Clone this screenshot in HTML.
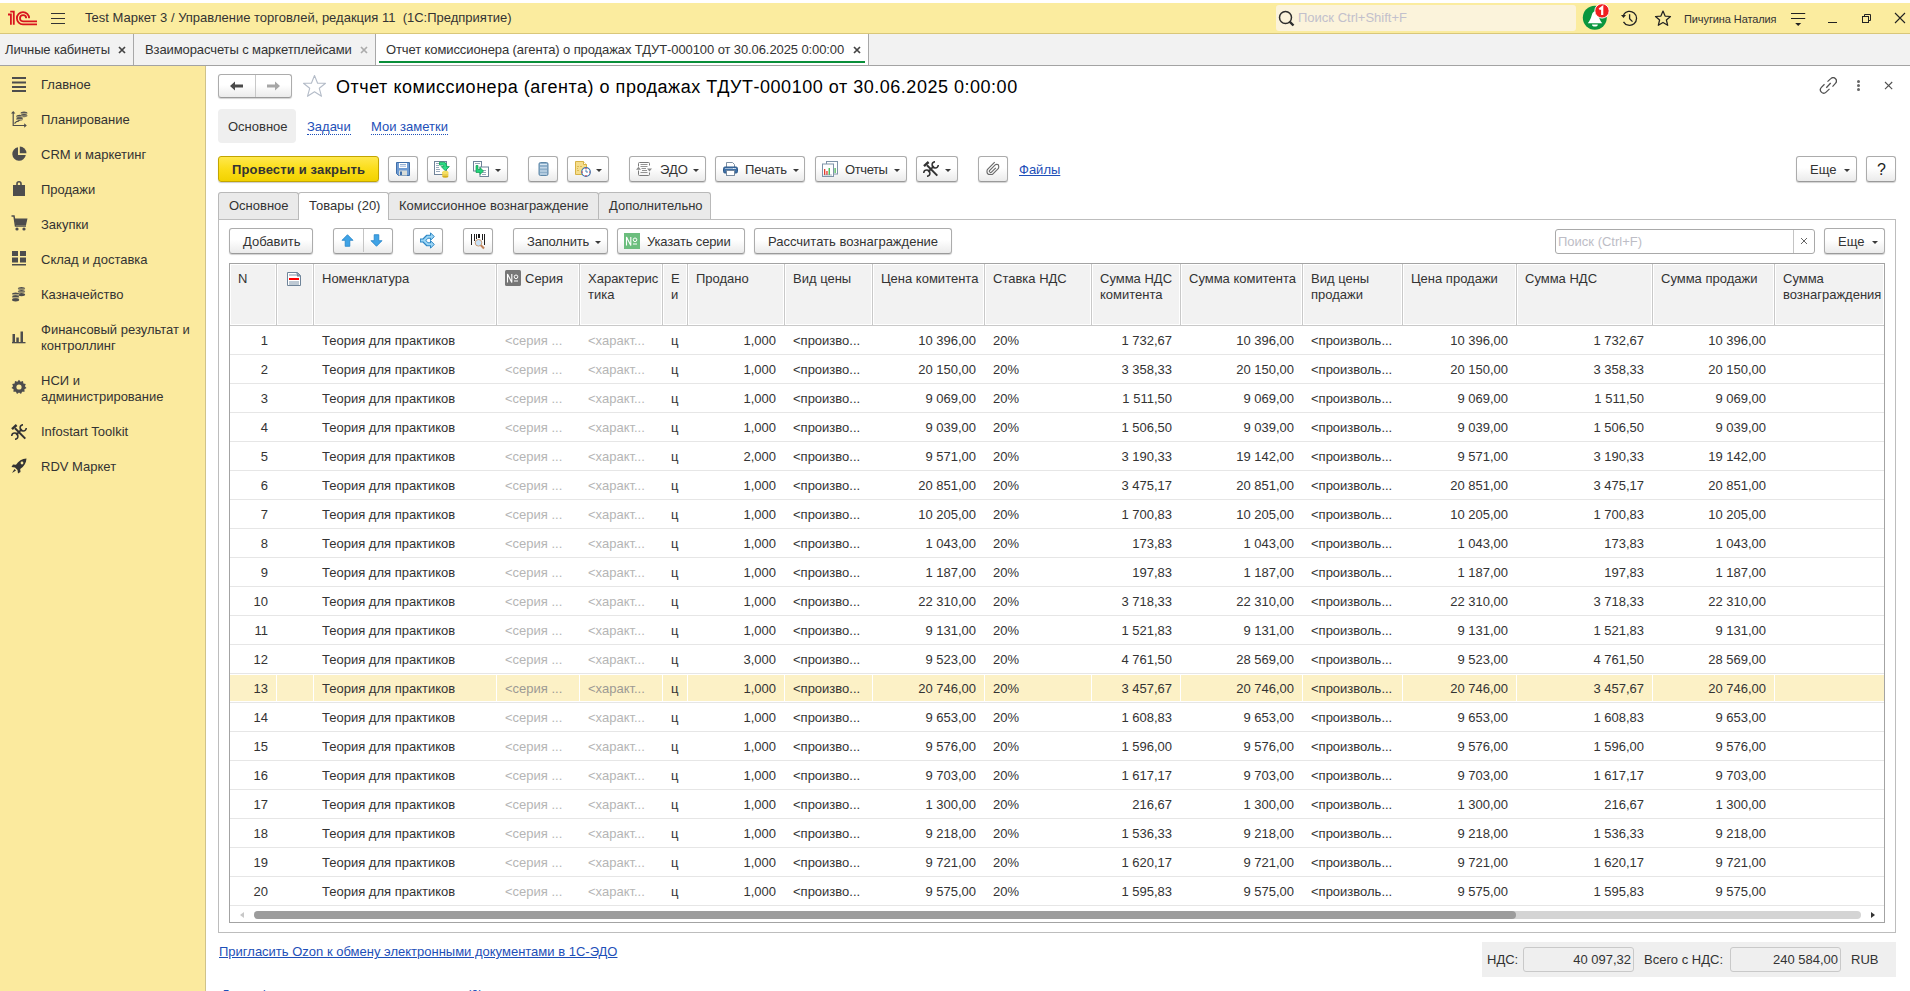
<!DOCTYPE html>
<html><head><meta charset="utf-8"><title>1C</title>
<style>
*{box-sizing:border-box}
html,body{margin:0;padding:0}
body{width:1910px;height:991px;overflow:hidden;position:relative;font-family:"Liberation Sans",sans-serif;font-size:13px;color:#333;background:#fff}
.a{position:absolute}
.t{position:absolute;white-space:nowrap;line-height:16px}
/* top bar */
#top{left:0;top:3px;width:1910px;height:31px;background:#FBEC9F;border-bottom:1px solid #D9C77A}
/* open windows bar */
#wtabs{left:0;top:34px;width:1910px;height:32px;background:#F2F2F2;border-bottom:1px solid #A3A3A3}
.wsep{position:absolute;top:0;width:1px;height:31px;background:#A8A8A8}
/* sidebar */
#side{left:0;top:66px;width:206px;height:925px;background:#FBEA9E;border-right:1px solid #CFC28A}
.si{position:absolute;left:41px;line-height:16px;color:#333}
.sic{position:absolute;left:11px}
/* buttons */
.btn{position:absolute;height:26px;border:1px solid #ACACAC;border-bottom-color:#9A9A9A;border-radius:3px;background:linear-gradient(#FFFFFF 0%,#FFFFFF 45%,#EBEBEB 100%);box-shadow:0 1px 1px rgba(0,0,0,.18)}
.btn .bt{position:absolute;top:3px;line-height:16px;white-space:nowrap;color:#333}
.dd{position:absolute;width:0;height:0;border-left:3px solid transparent;border-right:3px solid transparent;border-top:3px solid #3A3A3A}
.lnk{color:#1D4FB8}
.dotu{border-bottom:1px dotted #1D4FB8}
/* form tabs */
.ft{position:absolute;top:192px;height:27px;border:1px solid #B9B9B9;border-bottom:none;border-radius:3px 3px 0 0;background:#EAEAEA;line-height:26px;padding-left:10px;color:#333;white-space:nowrap}
#panel{left:218px;top:219px;width:1678px;height:714px;border:1px solid #BDBDBD}
/* table */
#tbl{left:229px;top:263px;width:1656px;height:660px;border:1px solid #A3A3A3;overflow:hidden;background:#fff}
.hc{position:absolute;top:0;height:61px;background:#F2F2F2;border-top:1px solid #fff;border-left:1px solid #fff;border-right:1px solid #fff;border-bottom:1px solid #fff;padding:6px 0 0 7px;line-height:16px;color:#333;white-space:nowrap;overflow:hidden}
.hsep{position:absolute;top:0;width:1px;height:61px;background:#C9C9C9}
.hbot{position:absolute;left:0;top:61px;width:1656px;height:1px;background:#C9C9C9}
.row{position:absolute;left:0;width:1656px;height:29px;border-bottom:1px solid #E6E6E6}
.c{position:absolute;top:1px;height:27px;line-height:28px;padding:0 8px;white-space:nowrap;overflow:hidden;color:#333}
.c.r{text-align:right}
.c.g{color:#B5B5B5}
.row.sel .c{top:1px;height:26px;line-height:28px;background:#FCF1C6}
.row.sel .c.g{color:#9C9A94}
.noic{display:inline-block;width:16px;height:16px;margin-right:4px;vertical-align:top;position:relative;top:-1px}
.hicon{position:absolute;left:9px;top:7px}
</style></head><body>

<!-- ============ TOP BAR ============ -->
<div id="top" class="a">
  <svg class="a" style="left:0;top:0" width="40" height="28" viewBox="0 3 40 28"><g fill="none" stroke="#D8141E" stroke-width="1.8" stroke-linejoin="miter"><path d="M8 14.5H10.9V24.8"/><path d="M10.2 11.6H13.8V24.8"/><path d="M29.1 18.2A6.1 6.1 0 1 0 23 24.3H37"/><path d="M26.2 18.2A3.1 3.1 0 1 0 23 21.3H37"/></g></svg>
  <div class="a" style="left:51px;top:10px;width:14px;height:1.4px;background:#333"></div>
  <div class="a" style="left:51px;top:15px;width:14px;height:1.4px;background:#333"></div>
  <div class="a" style="left:51px;top:20px;width:14px;height:1.4px;background:#333"></div>
  <div class="t" style="left:85px;top:7px;color:#333">Test Маркет 3 / Управление торговлей, редакция 11&nbsp; (1С:Предприятие)</div>

  <div class="a" style="left:1276px;top:2px;width:300px;height:26px;background:#FBF3DB;border-radius:3px"></div>
  <svg class="a" style="left:1278px;top:7px" width="17" height="17" viewBox="0 0 17 17"><circle cx="7.5" cy="7.5" r="6" fill="none" stroke="#2E2E2E" stroke-width="1.5"/><path d="M11.6 11.6L15.5 15.5" stroke="#2E2E2E" stroke-width="2.4"/></svg>
  <div class="t" style="left:1298px;top:7px;color:#C2C0CC">Поиск Ctrl+Shift+F</div>

  <!-- bell -->
  <svg class="a" style="left:1578px;top:-1px" width="34" height="32" viewBox="0 0 34 32">
    <circle cx="16.8" cy="15.8" r="12" fill="#0A963E"/>
    <path d="M9.8 21.2H24.2C22.6 19.4 21.2 16.8 20.2 13C19.5 10.5 18.2 9.3 17 9.3C15.8 9.3 14.5 10.5 13.8 13C12.8 16.8 11.4 19.4 9.8 21.2Z" fill="#fff"/>
    <path d="M14 22.4H19.8A2.9 2 0 0 1 14 22.4Z" fill="#fff"/>
    <circle cx="24" cy="8.9" r="7.2" fill="#F02020" stroke="#fff" stroke-width="1"/>
    <path d="M21.3 7.4L24.2 5.2V13" fill="none" stroke="#fff" stroke-width="2.2"/>
  </svg>
  <!-- history -->
  <svg class="a" style="left:1620px;top:6px" width="18" height="18" viewBox="0 0 18 18"><path d="M3.5 12.8A7 7 0 1 0 3.5 5.8" fill="none" stroke="#222" stroke-width="1.3"/><path d="M1 5.9H6L3.5 9Z" fill="#222"/><path d="M9.6 5.3V9.7L12.5 12.6" fill="none" stroke="#222" stroke-width="1.3"/></svg>
  <!-- star -->
  <svg class="a" style="left:1654px;top:6px" width="18" height="19" viewBox="0 -0.5 18 19"><path d="M9 1.6L11.1 6.6L16.5 7L12.4 10.5L13.7 15.8L9 13L4.3 15.8L5.6 10.5L1.5 7L6.9 6.6Z" fill="none" stroke="#222" stroke-width="1.25" stroke-linejoin="round"/></svg>
  <div class="t" style="left:1684px;top:8px;font-size:11px;color:#333;letter-spacing:-0.1px">Пичугина Наталия</div>
  <!-- filter/menu -->
  <svg class="a" style="left:1789px;top:8px" width="17" height="17" viewBox="0 0 17 17"><path d="M2 2.5H16.2M2 7.5H16.2" stroke="#222" stroke-width="1.05"/><path d="M6.2 11.9H12.2L9.2 14.9Z" fill="#222"/></svg>
  <div class="a" style="left:1828px;top:19px;width:9px;height:1px;background:#222"></div>
  <svg class="a" style="left:1860px;top:10px" width="12" height="12" viewBox="0 0 12 12"><path d="M4.5 3.5V1.5H10.5V7.5H8.5" fill="none" stroke="#222" stroke-width="1"/><rect x="2.5" y="3.5" width="6" height="6" fill="none" stroke="#222" stroke-width="1"/></svg>
  <svg class="a" style="left:1894px;top:9px" width="13" height="13" viewBox="0 0 13 13"><path d="M1 1L11 11M11 1L1 11" stroke="#222" stroke-width="1.1"/></svg>
</div>

<!-- ============ OPEN WINDOWS TABS ============ -->
<div id="wtabs" class="a">
  <div class="t" style="left:5px;top:8px;letter-spacing:-0.15px">Личные кабинеты</div>
  <svg class="a" style="left:118px;top:12px" width="8" height="8" viewBox="0 0 8 8"><path d="M1 1L7 7M7 1L1 7" stroke="#444" stroke-width="1.7"/></svg>
  <div class="wsep" style="left:133px"></div>
  <div class="t" style="left:145px;top:8px;letter-spacing:-0.1px">Взаиморасчеты с маркетплейсами</div>
  <svg class="a" style="left:360px;top:12px" width="8" height="8" viewBox="0 0 8 8"><path d="M1 1L7 7M7 1L1 7" stroke="#ABABAB" stroke-width="1.7"/></svg>
  <div class="wsep" style="left:375px"></div>
  <div class="a" style="left:376px;top:0;width:492px;height:31px;background:#fff"></div>
  <div class="t" style="left:386px;top:8px;letter-spacing:-0.1px">Отчет комиссионера (агента) о продажах ТДУТ-000100 от 30.06.2025 0:00:00</div>
  <svg class="a" style="left:853px;top:12px" width="8" height="8" viewBox="0 0 8 8"><path d="M1 1L7 7M7 1L1 7" stroke="#444" stroke-width="1.7"/></svg>
  <div class="a" style="left:379px;top:27px;width:486px;height:2px;background:#0A8F3A"></div>
  <div class="wsep" style="left:868px"></div>
</div>

<!-- ============ SIDEBAR ============ -->
<div id="side" class="a">
  <!-- Главное -->
  <svg class="sic" style="top:10px" width="16" height="16" viewBox="0 0 16 16"><path d="M1 2H15M1 6.5H15M1 11H15M1 15H15" stroke="#4D4D4D" stroke-width="1.8"/></svg>
  <div class="si" style="top:11px">Главное</div>
  <!-- Планирование -->
  <svg class="sic" style="top:44px" width="17" height="18" viewBox="0 0 17 18"><path d="M2.2 2V15.5H15" fill="none" stroke="#4D4D4D" stroke-width="1.2"/><path d="M0 3.6L2.2 1L4.4 3.6Z M13.2 13.3L15.8 15.5L13.2 17.7Z" fill="#4D4D4D"/><path d="M3.5 13.5L5.5 11.5H7L9 9.5" fill="none" stroke="#4D4D4D" stroke-width="1.1"/><g fill="#4D4D4D"><ellipse cx="13" cy="3" rx="3.4" ry="1.6"/><ellipse cx="13" cy="5.6" rx="3.4" ry="1.6"/><ellipse cx="8.6" cy="6.4" rx="3.4" ry="1.6"/><ellipse cx="8.6" cy="9" rx="3.4" ry="1.6"/></g><path d="M9.8 3.4H16.2M9.8 6H16.2M5.4 6.8H11.8M5.4 9.4H11.8" stroke="#FBEA9E" stroke-width="0.6"/></svg>
  <div class="si" style="top:46px">Планирование</div>
  <!-- CRM -->
  <svg class="sic" style="top:80px" width="16" height="16" viewBox="0 0 16 16"><path d="M7 1.2A6.8 6.8 0 1 0 14.8 9H7Z" fill="#4D4D4D"/><path d="M8.8 0.5V7.2H15.5A7 7 0 0 0 8.8 0.5Z" fill="#4D4D4D"/></svg>
  <div class="si" style="top:81px">CRM и маркетинг</div>
  <!-- Продажи -->
  <svg class="sic" style="top:114px" width="16" height="17" viewBox="0 0 16 17"><path d="M2 5H14V16H2Z" fill="#4D4D4D"/><path d="M6 5.5V3.8A2 2 0 0 1 10 3.8V5.5" fill="none" stroke="#4D4D4D" stroke-width="1.6"/></svg>
  <div class="si" style="top:116px">Продажи</div>
  <!-- Закупки -->
  <svg class="sic" style="top:149px" width="17" height="16" viewBox="0 0 17 16"><path d="M0.5 1H3L4.5 11H15" fill="none" stroke="#4D4D4D" stroke-width="1.5"/><path d="M3.5 3.5H16.5L15 10H4.5Z" fill="#4D4D4D"/><circle cx="6" cy="14" r="1.6" fill="#4D4D4D"/><circle cx="13" cy="14" r="1.6" fill="#4D4D4D"/></svg>
  <div class="si" style="top:151px">Закупки</div>
  <!-- Склад -->
  <svg class="sic" style="top:184px" width="16" height="16" viewBox="0 0 16 16"><rect x="1" y="1" width="6" height="5" fill="#4D4D4D"/><rect x="9" y="1" width="6" height="5" fill="#4D4D4D"/><rect x="1" y="7.5" width="6" height="5" fill="#4D4D4D"/><rect x="9" y="7.5" width="6" height="5" fill="#4D4D4D"/><rect x="1" y="14" width="14" height="1.5" fill="#4D4D4D"/></svg>
  <div class="si" style="top:186px">Склад и доставка</div>
  <!-- Казначейство -->
  <svg class="sic" style="top:219px" width="16" height="17" viewBox="0 0 16 17"><g fill="#4D4D4D"><ellipse cx="10.5" cy="3.6" rx="3.6" ry="1.7"/><ellipse cx="10.5" cy="6.6" rx="3.6" ry="1.7"/><ellipse cx="10.5" cy="9.6" rx="3.6" ry="1.7"/><ellipse cx="4.6" cy="9.2" rx="3.6" ry="1.7"/><ellipse cx="4.6" cy="12.2" rx="3.6" ry="1.7"/><ellipse cx="4.6" cy="14.8" rx="3.6" ry="1.6"/></g><path d="M7.2 4.1H14.3M7.2 7.1H14.3M1 9.7H8.2M1 12.7H8.2" stroke="#FBEA9E" stroke-width="0.7"/></svg>
  <div class="si" style="top:221px">Казначейство</div>
  <!-- Финансовый -->
  <svg class="sic" style="top:262px" width="16" height="16" viewBox="0 0 16 16"><g fill="#4D4D4D"><rect x="1.5" y="6" width="2.5" height="8"/><rect x="5.3" y="9.5" width="2.5" height="4.5"/><rect x="9.5" y="3.5" width="2.5" height="10.5"/><rect x="1" y="14" width="13.5" height="1.3"/></g></svg>
  <div class="si" style="top:256px">Финансовый результат и<br>контроллинг</div>
  <!-- НСИ -->
  <svg class="sic" style="top:313px" width="16" height="16" viewBox="0 0 16 16"><path d="M8 0.8L9.6 2.7L12 2L12.4 4.4L14.8 5L13.9 7.3L15.5 9.1L13.4 10.3L13.6 12.8L11.1 12.7L10 15L8 13.6L6 15L4.9 12.7L2.4 12.8L2.6 10.3L0.5 9.1L2.1 7.3L1.2 5L3.6 4.4L4 2L6.4 2.7Z" fill="#4D4D4D"/><circle cx="8" cy="8" r="2.6" fill="#FBEA9E"/></svg>
  <div class="si" style="top:307px">НСИ и<br>администрирование</div>
  <!-- Infostart -->
  <svg class="sic" style="top:358px" width="16" height="16" viewBox="0 0 16 16"><g fill="none" stroke="#333"><path d="M4 4.2L14.3 14.6" stroke-width="2"/><path d="M1 5.2L5.6 1" stroke-width="2.4"/><path d="M5.2 10.8L10.8 5.2" stroke-width="1.7"/><path d="M12 0.7A3.1 3.1 0 1 0 15.3 4" stroke-width="1.5"/><path d="M0.7 12A3.1 3.1 0 1 1 4 15.3" stroke-width="1.5"/></g></svg>
  <div class="si" style="top:358px">Infostart Toolkit</div>
  <!-- RDV -->
  <svg class="sic" style="top:392px" width="16" height="16" viewBox="0 0 16 16"><path d="M15.5 0.5C11 0.8 7.5 3 5 6.8L2 6.5L0.5 9L4 9.5L6.5 12L7 15.5L9.5 14L9.2 11C13 8.5 15.2 5 15.5 0.5Z" fill="#333"/><path d="M3.5 11L1 15L5 12.5Z" fill="#333"/><circle cx="11" cy="5" r="1.4" fill="#FBEA9E"/></svg>
  <div class="si" style="top:393px">RDV Маркет</div>
</div>

<!-- ============ FORM HEADER ============ -->
<div class="btn" style="left:218px;top:74px;width:74px;height:24px"></div>
<div class="a" style="left:255px;top:75px;width:1px;height:22px;background:#C8C8C8"></div>
<svg class="a" style="left:229px;top:80px" width="16" height="12" viewBox="0 0 16 12"><path d="M1 6L6 1.5V4.5H14V7.5H6V10.5Z" fill="#4A4A4A"/></svg>
<svg class="a" style="left:265px;top:80px" width="16" height="12" viewBox="0 0 16 12"><path d="M15 6L10 1.5V4.5H2V7.5H10V10.5Z" fill="#A6A6A6"/></svg>
<svg class="a" style="left:302px;top:74px" width="25" height="24" viewBox="0 0 25 24"><path d="M12.5 1.5L15.6 9.2L23.5 9.3L17.3 14.3L19.5 22.3L12.5 17.8L5.5 22.3L7.7 14.3L1.5 9.3L9.4 9.2Z" fill="none" stroke="#B4BCC8" stroke-width="1.1" stroke-linejoin="round"/></svg>
<div class="t" style="left:336px;top:77px;font-size:18px;line-height:20px;color:#000;letter-spacing:0.52px">Отчет комиссионера (агента) о продажах ТДУТ-000100 от 30.06.2025 0:00:00</div>
<!-- right icons -->
<svg class="a" style="left:1819px;top:77px" width="18" height="18" viewBox="0 0 18 18"><g fill="none" stroke="#505050" stroke-width="1.25"><path d="M8.5 4.6L11.8 1.6A3.3 3.3 0 0 1 16.4 6.4L13.5 9.6"/><path d="M5.5 7.3L2.4 10.4A3.3 3.3 0 0 0 7.1 15.1L10.5 11.9"/><path d="M7.3 10.7L11.7 6"/></g></svg>
<div class="a" style="left:1857px;top:80px;width:3px;height:3px;border-radius:50%;background:#666"></div>
<div class="a" style="left:1857px;top:84px;width:3px;height:3px;border-radius:50%;background:#666"></div>
<div class="a" style="left:1857px;top:88px;width:3px;height:3px;border-radius:50%;background:#666"></div>
<svg class="a" style="left:1884px;top:81px" width="10" height="10" viewBox="0 0 10 10"><path d="M1 1L8.2 8.2M8.2 1L1 8.2" stroke="#505050" stroke-width="1.1"/></svg>

<!-- navigation pills -->
<div class="a" style="left:218px;top:109px;width:78px;height:34px;background:#EFEFEF;border-radius:4px"></div>
<div class="t" style="left:228px;top:119px">Основное</div>
<div class="t lnk" style="left:307px;top:119px"><span class="dotu">Задачи</span></div>
<div class="t lnk" style="left:371px;top:119px"><span class="dotu">Мои заметки</span></div>

<!-- ============ COMMAND BAR ============ -->
<div class="a" style="left:218px;top:156px;width:161px;height:26px;border:1px solid #C2A500;border-radius:3px;background:linear-gradient(#FFE84D 0%,#FBDD19 50%,#F2D200 100%);box-shadow:0 1px 1px rgba(0,0,0,.2)"></div>
<div class="t" style="left:232px;top:162px;font-weight:bold;color:#333;letter-spacing:0.15px">Провести и закрыть</div>

<div class="btn" style="left:388px;top:156px;width:30px"></div>
<svg class="a" style="left:396px;top:162px" width="14" height="14" viewBox="0 0 14 14"><path d="M0.5 0.5H13.5V13.5H2.5L0.5 11.5Z" fill="#6E9BD3" stroke="#3F6EA8"/><rect x="3" y="1" width="8" height="5" fill="#fff"/><path d="M4 2.5H10M4 4.2H10" stroke="#7DA0CC" stroke-width="0.8"/><rect x="3" y="8.5" width="8" height="5" fill="#D8DCD8"/><rect x="4" y="9.5" width="2" height="3.5" fill="#3F6EA8"/></svg>

<div class="btn" style="left:427px;top:156px;width:30px"></div>
<svg class="a" style="left:434px;top:161px" width="17" height="17" viewBox="0 0 17 17"><rect x="0.5" y="0.5" width="12" height="13" fill="#fff" stroke="#6F8399"/><g fill="#9AAABD" shape-rendering="crispEdges"><rect x="2" y="2" width="4" height="1"/><rect x="2" y="4" width="3" height="1"/><rect x="2" y="6" width="3" height="1"/><rect x="2" y="8" width="4" height="1"/><rect x="2" y="10" width="4" height="1"/></g><path d="M5.5 1.2H9.3Q12.6 1.2 12.6 4.5V5.6H15.3L11.3 9.8L7.3 5.6H9.8V5Q9.8 4.1 8.9 4.1H5.5Z" fill="#2BDB85" stroke="#0D9B4E" stroke-width="0.8"/><rect x="8.3" y="11" width="6" height="4.5" fill="#E6C22C"/><ellipse cx="11.3" cy="11" rx="3" ry="1.2" fill="#F5DF62"/><ellipse cx="11.3" cy="15.5" rx="3" ry="1.2" fill="#D4AE1E"/><path d="M8.5 12.6H14.1M8.5 14.1H14.1" stroke="#FFF29A" stroke-width="0.6"/></svg>

<div class="btn" style="left:466px;top:156px;width:42px"></div>
<svg class="a" style="left:473px;top:161px" width="16" height="16" viewBox="0 0 16 16"><rect x="0.5" y="0.5" width="8" height="9.5" fill="#fff" stroke="#6F8399"/><rect x="7" y="6" width="8.5" height="9.5" fill="#fff" stroke="#6F8399"/><path d="M2 2.5H7M9 9.5H13M9 11.5H13M9 13.5H13" stroke="#7F93A8" stroke-width="0.8"/><path d="M3 4.5H5V8.5H7V6.5L10.5 10L7 13.5V11.5H3Z" fill="#22D37B" stroke="#0D9B4E" stroke-width="0.7"/></svg>
<div class="dd" style="left:495px;top:169px"></div>

<div class="btn" style="left:528px;top:156px;width:30px"></div>
<svg class="a" style="left:535px;top:162px" width="16" height="14" viewBox="0 0 16 14"><rect x="4" y="0.5" width="9" height="13" rx="1.5" fill="#8FB0CB" stroke="#5E87A8"/><path d="M5 2.5H12M5 5.8H12M5 9H12M5 12H12" stroke="#D6E6F2" stroke-width="1"/></svg>

<div class="btn" style="left:567px;top:156px;width:42px"></div>
<svg class="a" style="left:575px;top:161px" width="16" height="16" viewBox="0 0 16 16"><path d="M0.5 0.5H8.5L11.5 3.5V13.5H0.5Z" fill="#F5DD8C" stroke="#D7B244"/><path d="M8.5 0.5V3.5H11.5" fill="#fff" stroke="#D7B244"/><path d="M2 5.5H4M5 5.5H7M2 7.5H3M2 9.5H4" stroke="#D7B244" stroke-width="0.8"/><circle cx="11" cy="11" r="4.3" fill="#fff" stroke="#3F77B0" stroke-width="1.2"/><path d="M11 8.5V11H13" stroke="#3F77B0" stroke-width="0.9" fill="none"/><circle cx="11" cy="7.3" r="0.6" fill="#f00"/><circle cx="11" cy="14.7" r="0.6" fill="#f00"/><circle cx="7.3" cy="11" r="0.6" fill="#f00"/><circle cx="14.7" cy="11" r="0.6" fill="#f00"/></svg>
<div class="dd" style="left:596px;top:169px"></div>

<div class="btn" style="left:629px;top:156px;width:77px"></div>
<svg class="a" style="left:636px;top:162px" width="16" height="14" viewBox="0 0 16 14"><path d="M2.5 4.5V1.5A1 1 0 0 1 3.5 0.5H12.5A1 1 0 0 1 13.5 1.5V3.5M13.5 10.5V12.5A1 1 0 0 1 12.5 13.5H3.5A1 1 0 0 1 2.5 12.5V8.5" fill="none" stroke="#7A7A7A" stroke-width="1"/><path d="M4.5 2.5H11.5M4.5 4.5H11.5M5.5 6.5H10M6 8.5H11M4.5 10.5H11.5" stroke="#7A7A7A" stroke-width="0.8"/><path d="M0 7.8L2.5 4.8L5 7.8Z" fill="#8A8A8A"/><path d="M11 6.5L13.5 9.5L16 6.5Z" fill="#8A8A8A"/></svg>
<div class="t" style="left:660px;top:162px">ЭДО</div>
<div class="dd" style="left:693px;top:169px"></div>

<div class="btn" style="left:715px;top:156px;width:90px"></div>
<svg class="a" style="left:723px;top:162px" width="15" height="14" viewBox="0 0 15 14"><path d="M3.5 5V0.5H9.5L11.5 2.5V5" fill="#fff" stroke="#6F8399" stroke-width="0.9"/><rect x="0.5" y="5" width="14" height="6" rx="1.5" fill="#3D6FA6" stroke="#2F5A8A"/><rect x="2" y="6" width="11" height="1" fill="#9DB7D4"/><rect x="3.5" y="8.5" width="8" height="5" fill="#fff" stroke="#6F8399" stroke-width="0.9"/><circle cx="10.5" cy="6.5" r="0.5" fill="#fff"/><circle cx="12" cy="6.5" r="0.5" fill="#fff"/></svg>
<div class="t" style="left:745px;top:162px;letter-spacing:-0.1px">Печать</div>
<div class="dd" style="left:793px;top:169px"></div>

<div class="btn" style="left:815px;top:156px;width:92px"></div>
<svg class="a" style="left:822px;top:161px" width="16" height="16" viewBox="0 0 16 16"><rect x="4.5" y="0.5" width="11" height="12.5" fill="#fff" stroke="#7F93A8"/><rect x="0.5" y="3" width="11" height="12.5" fill="#fff" stroke="#7F93A8"/><rect x="2" y="8" width="1.3" height="6" fill="#E53A2B"/><rect x="4.3" y="10" width="1.3" height="4" fill="#E53A2B"/><rect x="6.6" y="7" width="1.3" height="7" fill="#3DB54A"/><rect x="12.5" y="7" width="1.2" height="5" fill="#3DB54A"/><path d="M1.5 14H10" stroke="#7F93A8" stroke-width="0.7"/></svg>
<div class="t" style="left:845px;top:162px;letter-spacing:-0.4px">Отчеты</div>
<div class="dd" style="left:894px;top:169px"></div>

<div class="btn" style="left:916px;top:156px;width:42px"></div>
<svg class="a" style="left:923px;top:161px" width="16" height="16" viewBox="0 0 16 16"><g fill="none" stroke="#333"><path d="M4 4.2L14.3 14.6" stroke-width="2"/><path d="M1 5.2L5.6 1" stroke-width="2.4"/><path d="M5.2 10.8L10.8 5.2" stroke-width="1.7"/><path d="M12 0.7A3.1 3.1 0 1 0 15.3 4" stroke-width="1.5"/><path d="M0.7 12A3.1 3.1 0 1 1 4 15.3" stroke-width="1.5"/></g></svg>
<div class="dd" style="left:945px;top:169px"></div>

<div class="btn" style="left:978px;top:156px;width:30px"></div>
<svg class="a" style="left:986px;top:161px" width="14" height="15" viewBox="0 0 14 15"><path d="M8.7 1.2L1.8 8.2Q1 9 1 10V11Q1 13.5 4 13.5H5.5Q6.3 13.5 7 12.8L12.2 7.6Q12.7 7.1 12.7 6.3V5Q12.7 3.3 11 3.3H10.5Q9.8 3.3 9.2 3.9L3.5 9.6Q3 10.2 3.6 10.9L4.3 11.4Q4.9 11.8 5.5 11.2L9.8 6.9" fill="none" stroke="#6A6A6A" stroke-width="1.15"/></svg>
<div class="t lnk" style="left:1019px;top:162px;text-decoration:underline">Файлы</div>

<div class="btn" style="left:1796px;top:156px;width:61px"></div>
<div class="t" style="left:1810px;top:162px">Еще</div>
<div class="dd" style="left:1844px;top:169px"></div>
<div class="btn" style="left:1866px;top:156px;width:30px"></div>
<div class="t" style="left:1877px;top:161px;font-size:16px;line-height:18px;color:#222">?</div>

<!-- ============ FORM TABS ============ -->
<div id="panel" class="a"></div>
<div class="ft" style="left:218px;width:81px">Основное</div>
<div class="ft" style="left:298px;width:91px;background:#fff;height:28px">Товары (20)</div>
<div class="ft" style="left:388px;width:211px">Комиссионное вознаграждение</div>
<div class="ft" style="left:598px;width:113px">Дополнительно</div>

<!-- ============ TABLE TOOLBAR ============ -->
<div class="btn" style="left:229px;top:228px;width:84px"></div>
<div class="t" style="left:243px;top:234px">Добавить</div>

<div class="btn" style="left:333px;top:228px;width:60px"></div>
<div class="a" style="left:363px;top:229px;width:1px;height:23px;background:#C4C4C4"></div>
<svg class="a" style="left:341px;top:234px" width="13" height="13" viewBox="0 0 13 13"><path d="M6.5 0.7L12 6.3H8.8V12.3H4.2V6.3H1Z" fill="#3FA3E6" stroke="#2383C6" stroke-width="0.8"/></svg>
<svg class="a" style="left:370px;top:234px" width="13" height="13" viewBox="0 0 13 13"><path d="M6.5 12.3L12 6.7H8.8V0.7H4.2V6.7H1Z" fill="#3FA3E6" stroke="#2383C6" stroke-width="0.8"/></svg>

<div class="btn" style="left:413px;top:228px;width:30px"></div>
<svg class="a" style="left:413px;top:228px" width="30" height="26" viewBox="0 0 30 26"><g fill="none" stroke-linejoin="miter"><path d="M7 12.5H10.5L14.2 8.7H18M10.5 12.5L14.2 16.3H18" stroke="#2D86C4" stroke-width="4"/><path d="M17.5 4.8L21.3 8.6L17.5 12.3Z M17.5 12.7L21.3 16.4L17.5 20.2Z" fill="#9AD5F5" stroke="#2D86C4" stroke-width="1"/><path d="M7.8 12.5H10.9L14.6 8.7H18.5M10.9 12.5L14.6 16.3H18.5" stroke="#9AD5F5" stroke-width="2"/></g></svg>

<div class="btn" style="left:463px;top:228px;width:30px"></div>
<svg class="a" style="left:470px;top:233px" width="16" height="17" viewBox="0 0 16 17" shape-rendering="crispEdges"><g fill="#1E1E1E"><rect x="1" y="1" width="1" height="11"/><rect x="4" y="1" width="1" height="7"/><rect x="6" y="1" width="1" height="5"/><rect x="8" y="1" width="2" height="4"/><rect x="12" y="1" width="1" height="6"/><rect x="14" y="1" width="1" height="11"/></g><g shape-rendering="auto"><circle cx="8.5" cy="9.8" r="3.3" fill="#C8E2F8" stroke="#C89A74" stroke-width="1"/><path d="M10.9 12.3L14 15.5" stroke="#C0825A" stroke-width="2"/></g></svg>

<div class="btn" style="left:513px;top:228px;width:95px"></div>
<div class="t" style="left:527px;top:234px;letter-spacing:-0.2px">Заполнить</div>
<div class="dd" style="left:595px;top:241px"></div>

<div class="btn" style="left:617px;top:228px;width:128px"></div>
<svg class="a" style="left:624px;top:233px" width="16" height="16" viewBox="0 0 16 16"><rect width="16" height="16" fill="#6CBE7E"/><path d="M2.5 12.5V4L6.8 12.5V4" fill="none" stroke="#fff" stroke-width="1.1"/><circle cx="11" cy="6.8" r="1.8" fill="none" stroke="#fff" stroke-width="1"/><rect x="9" y="10.5" width="4" height="1" fill="#fff"/></svg>
<div class="t" style="left:647px;top:234px;letter-spacing:-0.15px">Указать серии</div>

<div class="btn" style="left:754px;top:228px;width:198px"></div>
<div class="t" style="left:768px;top:234px">Рассчитать вознаграждение</div>

<!-- search -->
<div class="a" style="left:1555px;top:229px;width:260px;height:25px;border:1px solid #A9A9A9;border-radius:3px;background:#fff"></div>
<div class="a" style="left:1793px;top:230px;width:1px;height:23px;background:#C4C4C4"></div>
<div class="t" style="left:1558px;top:234px;color:#BDBDC6">Поиск (Ctrl+F)</div>
<svg class="a" style="left:1800px;top:237px" width="8" height="8" viewBox="0 0 8 8"><path d="M1 1L7 7M7 1L1 7" stroke="#666" stroke-width="1"/></svg>
<div class="btn" style="left:1824px;top:228px;width:61px"></div>
<div class="t" style="left:1838px;top:234px">Еще</div>
<div class="dd" style="left:1872px;top:241px"></div>

<!-- ============ TABLE ============ -->
<div id="tbl" class="a">
<div class="hbot"></div>
<div class="hc" style="left:0px;width:46px">N</div>
<div class="hsep" style="left:46px"></div>
<div class="hc" style="left:47px;width:36px"><svg class="hicon" width="14" height="14" viewBox="0 0 14 14"><path d="M0.5 0.5H10.5L13.5 3.5V13.5H0.5Z" fill="#fff" stroke="#6F8499"/><path d="M10 0.5V4H13.5" fill="#8A9BB0" stroke="#6F8499"/><rect x="2" y="2.5" width="7" height="1" fill="#7F93A8"/><rect x="2" y="6" width="10" height="2" fill="#F00"/><rect x="2" y="9.5" width="10" height="1" fill="#7F93A8"/><rect x="2" y="11.5" width="10" height="1" fill="#7F93A8"/></svg></div>
<div class="hsep" style="left:83px"></div>
<div class="hc" style="left:84px;width:182px">Номенклатура</div>
<div class="hsep" style="left:266px"></div>
<div class="hc" style="left:267px;width:82px"><svg class="noic" width="16" height="16" viewBox="0 0 16 16"><rect width="16" height="16" rx="1.5" fill="#777"/><path d="M2.5 12.5V4L6.8 12.5V4" fill="none" stroke="#fff" stroke-width="1.1"/><circle cx="11" cy="6.8" r="1.8" fill="none" stroke="#fff" stroke-width="1"/><rect x="9" y="10.5" width="4" height="1" fill="#fff"/></svg>Серия</div>
<div class="hsep" style="left:349px"></div>
<div class="hc" style="left:350px;width:82px">Характерис<br>тика</div>
<div class="hsep" style="left:432px"></div>
<div class="hc" style="left:433px;width:24px">Е<br>и</div>
<div class="hsep" style="left:457px"></div>
<div class="hc" style="left:458px;width:96px">Продано</div>
<div class="hsep" style="left:554px"></div>
<div class="hc" style="left:555px;width:87px">Вид цены</div>
<div class="hsep" style="left:642px"></div>
<div class="hc" style="left:643px;width:111px">Цена комитента</div>
<div class="hsep" style="left:754px"></div>
<div class="hc" style="left:755px;width:106px">Ставка НДС</div>
<div class="hsep" style="left:861px"></div>
<div class="hc" style="left:862px;width:88px">Сумма НДС<br>комитента</div>
<div class="hsep" style="left:950px"></div>
<div class="hc" style="left:951px;width:121px">Сумма комитента</div>
<div class="hsep" style="left:1072px"></div>
<div class="hc" style="left:1073px;width:99px">Вид цены<br>продажи</div>
<div class="hsep" style="left:1172px"></div>
<div class="hc" style="left:1173px;width:113px">Цена продажи</div>
<div class="hsep" style="left:1286px"></div>
<div class="hc" style="left:1287px;width:135px">Сумма НДС</div>
<div class="hsep" style="left:1422px"></div>
<div class="hc" style="left:1423px;width:121px">Сумма продажи</div>
<div class="hsep" style="left:1544px"></div>
<div class="hc" style="left:1545px;width:109px">Сумма<br>вознаграждения</div>
<div class="row" style="top:62px">
<div class="c r" style="left:0px;width:46px">1</div>
<div class="c" style="left:47px;width:36px"></div>
<div class="c" style="left:84px;width:182px">Теория для практиков</div>
<div class="c g" style="left:267px;width:82px">&lt;серия ...</div>
<div class="c g" style="left:350px;width:82px">&lt;характ...</div>
<div class="c" style="left:433px;width:24px">ц</div>
<div class="c r" style="left:458px;width:96px">1,000</div>
<div class="c" style="left:555px;width:87px">&lt;произво...</div>
<div class="c r" style="left:643px;width:111px">10 396,00</div>
<div class="c" style="left:755px;width:106px">20%</div>
<div class="c r" style="left:862px;width:88px">1 732,67</div>
<div class="c r" style="left:951px;width:121px">10 396,00</div>
<div class="c" style="left:1073px;width:99px">&lt;произволь...</div>
<div class="c r" style="left:1173px;width:113px">10 396,00</div>
<div class="c r" style="left:1287px;width:135px">1 732,67</div>
<div class="c r" style="left:1423px;width:121px">10 396,00</div>
<div class="c" style="left:1545px;width:109px"></div>
</div>
<div class="row" style="top:91px">
<div class="c r" style="left:0px;width:46px">2</div>
<div class="c" style="left:47px;width:36px"></div>
<div class="c" style="left:84px;width:182px">Теория для практиков</div>
<div class="c g" style="left:267px;width:82px">&lt;серия ...</div>
<div class="c g" style="left:350px;width:82px">&lt;характ...</div>
<div class="c" style="left:433px;width:24px">ц</div>
<div class="c r" style="left:458px;width:96px">1,000</div>
<div class="c" style="left:555px;width:87px">&lt;произво...</div>
<div class="c r" style="left:643px;width:111px">20 150,00</div>
<div class="c" style="left:755px;width:106px">20%</div>
<div class="c r" style="left:862px;width:88px">3 358,33</div>
<div class="c r" style="left:951px;width:121px">20 150,00</div>
<div class="c" style="left:1073px;width:99px">&lt;произволь...</div>
<div class="c r" style="left:1173px;width:113px">20 150,00</div>
<div class="c r" style="left:1287px;width:135px">3 358,33</div>
<div class="c r" style="left:1423px;width:121px">20 150,00</div>
<div class="c" style="left:1545px;width:109px"></div>
</div>
<div class="row" style="top:120px">
<div class="c r" style="left:0px;width:46px">3</div>
<div class="c" style="left:47px;width:36px"></div>
<div class="c" style="left:84px;width:182px">Теория для практиков</div>
<div class="c g" style="left:267px;width:82px">&lt;серия ...</div>
<div class="c g" style="left:350px;width:82px">&lt;характ...</div>
<div class="c" style="left:433px;width:24px">ц</div>
<div class="c r" style="left:458px;width:96px">1,000</div>
<div class="c" style="left:555px;width:87px">&lt;произво...</div>
<div class="c r" style="left:643px;width:111px">9 069,00</div>
<div class="c" style="left:755px;width:106px">20%</div>
<div class="c r" style="left:862px;width:88px">1 511,50</div>
<div class="c r" style="left:951px;width:121px">9 069,00</div>
<div class="c" style="left:1073px;width:99px">&lt;произволь...</div>
<div class="c r" style="left:1173px;width:113px">9 069,00</div>
<div class="c r" style="left:1287px;width:135px">1 511,50</div>
<div class="c r" style="left:1423px;width:121px">9 069,00</div>
<div class="c" style="left:1545px;width:109px"></div>
</div>
<div class="row" style="top:149px">
<div class="c r" style="left:0px;width:46px">4</div>
<div class="c" style="left:47px;width:36px"></div>
<div class="c" style="left:84px;width:182px">Теория для практиков</div>
<div class="c g" style="left:267px;width:82px">&lt;серия ...</div>
<div class="c g" style="left:350px;width:82px">&lt;характ...</div>
<div class="c" style="left:433px;width:24px">ц</div>
<div class="c r" style="left:458px;width:96px">1,000</div>
<div class="c" style="left:555px;width:87px">&lt;произво...</div>
<div class="c r" style="left:643px;width:111px">9 039,00</div>
<div class="c" style="left:755px;width:106px">20%</div>
<div class="c r" style="left:862px;width:88px">1 506,50</div>
<div class="c r" style="left:951px;width:121px">9 039,00</div>
<div class="c" style="left:1073px;width:99px">&lt;произволь...</div>
<div class="c r" style="left:1173px;width:113px">9 039,00</div>
<div class="c r" style="left:1287px;width:135px">1 506,50</div>
<div class="c r" style="left:1423px;width:121px">9 039,00</div>
<div class="c" style="left:1545px;width:109px"></div>
</div>
<div class="row" style="top:178px">
<div class="c r" style="left:0px;width:46px">5</div>
<div class="c" style="left:47px;width:36px"></div>
<div class="c" style="left:84px;width:182px">Теория для практиков</div>
<div class="c g" style="left:267px;width:82px">&lt;серия ...</div>
<div class="c g" style="left:350px;width:82px">&lt;характ...</div>
<div class="c" style="left:433px;width:24px">ц</div>
<div class="c r" style="left:458px;width:96px">2,000</div>
<div class="c" style="left:555px;width:87px">&lt;произво...</div>
<div class="c r" style="left:643px;width:111px">9 571,00</div>
<div class="c" style="left:755px;width:106px">20%</div>
<div class="c r" style="left:862px;width:88px">3 190,33</div>
<div class="c r" style="left:951px;width:121px">19 142,00</div>
<div class="c" style="left:1073px;width:99px">&lt;произволь...</div>
<div class="c r" style="left:1173px;width:113px">9 571,00</div>
<div class="c r" style="left:1287px;width:135px">3 190,33</div>
<div class="c r" style="left:1423px;width:121px">19 142,00</div>
<div class="c" style="left:1545px;width:109px"></div>
</div>
<div class="row" style="top:207px">
<div class="c r" style="left:0px;width:46px">6</div>
<div class="c" style="left:47px;width:36px"></div>
<div class="c" style="left:84px;width:182px">Теория для практиков</div>
<div class="c g" style="left:267px;width:82px">&lt;серия ...</div>
<div class="c g" style="left:350px;width:82px">&lt;характ...</div>
<div class="c" style="left:433px;width:24px">ц</div>
<div class="c r" style="left:458px;width:96px">1,000</div>
<div class="c" style="left:555px;width:87px">&lt;произво...</div>
<div class="c r" style="left:643px;width:111px">20 851,00</div>
<div class="c" style="left:755px;width:106px">20%</div>
<div class="c r" style="left:862px;width:88px">3 475,17</div>
<div class="c r" style="left:951px;width:121px">20 851,00</div>
<div class="c" style="left:1073px;width:99px">&lt;произволь...</div>
<div class="c r" style="left:1173px;width:113px">20 851,00</div>
<div class="c r" style="left:1287px;width:135px">3 475,17</div>
<div class="c r" style="left:1423px;width:121px">20 851,00</div>
<div class="c" style="left:1545px;width:109px"></div>
</div>
<div class="row" style="top:236px">
<div class="c r" style="left:0px;width:46px">7</div>
<div class="c" style="left:47px;width:36px"></div>
<div class="c" style="left:84px;width:182px">Теория для практиков</div>
<div class="c g" style="left:267px;width:82px">&lt;серия ...</div>
<div class="c g" style="left:350px;width:82px">&lt;характ...</div>
<div class="c" style="left:433px;width:24px">ц</div>
<div class="c r" style="left:458px;width:96px">1,000</div>
<div class="c" style="left:555px;width:87px">&lt;произво...</div>
<div class="c r" style="left:643px;width:111px">10 205,00</div>
<div class="c" style="left:755px;width:106px">20%</div>
<div class="c r" style="left:862px;width:88px">1 700,83</div>
<div class="c r" style="left:951px;width:121px">10 205,00</div>
<div class="c" style="left:1073px;width:99px">&lt;произволь...</div>
<div class="c r" style="left:1173px;width:113px">10 205,00</div>
<div class="c r" style="left:1287px;width:135px">1 700,83</div>
<div class="c r" style="left:1423px;width:121px">10 205,00</div>
<div class="c" style="left:1545px;width:109px"></div>
</div>
<div class="row" style="top:265px">
<div class="c r" style="left:0px;width:46px">8</div>
<div class="c" style="left:47px;width:36px"></div>
<div class="c" style="left:84px;width:182px">Теория для практиков</div>
<div class="c g" style="left:267px;width:82px">&lt;серия ...</div>
<div class="c g" style="left:350px;width:82px">&lt;характ...</div>
<div class="c" style="left:433px;width:24px">ц</div>
<div class="c r" style="left:458px;width:96px">1,000</div>
<div class="c" style="left:555px;width:87px">&lt;произво...</div>
<div class="c r" style="left:643px;width:111px">1 043,00</div>
<div class="c" style="left:755px;width:106px">20%</div>
<div class="c r" style="left:862px;width:88px">173,83</div>
<div class="c r" style="left:951px;width:121px">1 043,00</div>
<div class="c" style="left:1073px;width:99px">&lt;произволь...</div>
<div class="c r" style="left:1173px;width:113px">1 043,00</div>
<div class="c r" style="left:1287px;width:135px">173,83</div>
<div class="c r" style="left:1423px;width:121px">1 043,00</div>
<div class="c" style="left:1545px;width:109px"></div>
</div>
<div class="row" style="top:294px">
<div class="c r" style="left:0px;width:46px">9</div>
<div class="c" style="left:47px;width:36px"></div>
<div class="c" style="left:84px;width:182px">Теория для практиков</div>
<div class="c g" style="left:267px;width:82px">&lt;серия ...</div>
<div class="c g" style="left:350px;width:82px">&lt;характ...</div>
<div class="c" style="left:433px;width:24px">ц</div>
<div class="c r" style="left:458px;width:96px">1,000</div>
<div class="c" style="left:555px;width:87px">&lt;произво...</div>
<div class="c r" style="left:643px;width:111px">1 187,00</div>
<div class="c" style="left:755px;width:106px">20%</div>
<div class="c r" style="left:862px;width:88px">197,83</div>
<div class="c r" style="left:951px;width:121px">1 187,00</div>
<div class="c" style="left:1073px;width:99px">&lt;произволь...</div>
<div class="c r" style="left:1173px;width:113px">1 187,00</div>
<div class="c r" style="left:1287px;width:135px">197,83</div>
<div class="c r" style="left:1423px;width:121px">1 187,00</div>
<div class="c" style="left:1545px;width:109px"></div>
</div>
<div class="row" style="top:323px">
<div class="c r" style="left:0px;width:46px">10</div>
<div class="c" style="left:47px;width:36px"></div>
<div class="c" style="left:84px;width:182px">Теория для практиков</div>
<div class="c g" style="left:267px;width:82px">&lt;серия ...</div>
<div class="c g" style="left:350px;width:82px">&lt;характ...</div>
<div class="c" style="left:433px;width:24px">ц</div>
<div class="c r" style="left:458px;width:96px">1,000</div>
<div class="c" style="left:555px;width:87px">&lt;произво...</div>
<div class="c r" style="left:643px;width:111px">22 310,00</div>
<div class="c" style="left:755px;width:106px">20%</div>
<div class="c r" style="left:862px;width:88px">3 718,33</div>
<div class="c r" style="left:951px;width:121px">22 310,00</div>
<div class="c" style="left:1073px;width:99px">&lt;произволь...</div>
<div class="c r" style="left:1173px;width:113px">22 310,00</div>
<div class="c r" style="left:1287px;width:135px">3 718,33</div>
<div class="c r" style="left:1423px;width:121px">22 310,00</div>
<div class="c" style="left:1545px;width:109px"></div>
</div>
<div class="row" style="top:352px">
<div class="c r" style="left:0px;width:46px">11</div>
<div class="c" style="left:47px;width:36px"></div>
<div class="c" style="left:84px;width:182px">Теория для практиков</div>
<div class="c g" style="left:267px;width:82px">&lt;серия ...</div>
<div class="c g" style="left:350px;width:82px">&lt;характ...</div>
<div class="c" style="left:433px;width:24px">ц</div>
<div class="c r" style="left:458px;width:96px">1,000</div>
<div class="c" style="left:555px;width:87px">&lt;произво...</div>
<div class="c r" style="left:643px;width:111px">9 131,00</div>
<div class="c" style="left:755px;width:106px">20%</div>
<div class="c r" style="left:862px;width:88px">1 521,83</div>
<div class="c r" style="left:951px;width:121px">9 131,00</div>
<div class="c" style="left:1073px;width:99px">&lt;произволь...</div>
<div class="c r" style="left:1173px;width:113px">9 131,00</div>
<div class="c r" style="left:1287px;width:135px">1 521,83</div>
<div class="c r" style="left:1423px;width:121px">9 131,00</div>
<div class="c" style="left:1545px;width:109px"></div>
</div>
<div class="row" style="top:381px">
<div class="c r" style="left:0px;width:46px">12</div>
<div class="c" style="left:47px;width:36px"></div>
<div class="c" style="left:84px;width:182px">Теория для практиков</div>
<div class="c g" style="left:267px;width:82px">&lt;серия ...</div>
<div class="c g" style="left:350px;width:82px">&lt;характ...</div>
<div class="c" style="left:433px;width:24px">ц</div>
<div class="c r" style="left:458px;width:96px">3,000</div>
<div class="c" style="left:555px;width:87px">&lt;произво...</div>
<div class="c r" style="left:643px;width:111px">9 523,00</div>
<div class="c" style="left:755px;width:106px">20%</div>
<div class="c r" style="left:862px;width:88px">4 761,50</div>
<div class="c r" style="left:951px;width:121px">28 569,00</div>
<div class="c" style="left:1073px;width:99px">&lt;произволь...</div>
<div class="c r" style="left:1173px;width:113px">9 523,00</div>
<div class="c r" style="left:1287px;width:135px">4 761,50</div>
<div class="c r" style="left:1423px;width:121px">28 569,00</div>
<div class="c" style="left:1545px;width:109px"></div>
</div>
<div class="row sel" style="top:410px">
<div class="c r" style="left:0px;width:46px">13</div>
<div class="c" style="left:47px;width:36px"></div>
<div class="c" style="left:84px;width:182px">Теория для практиков</div>
<div class="c g" style="left:267px;width:82px">&lt;серия ...</div>
<div class="c g" style="left:350px;width:82px">&lt;характ...</div>
<div class="c" style="left:433px;width:24px">ц</div>
<div class="c r" style="left:458px;width:96px">1,000</div>
<div class="c" style="left:555px;width:87px">&lt;произво...</div>
<div class="c r" style="left:643px;width:111px">20 746,00</div>
<div class="c" style="left:755px;width:106px">20%</div>
<div class="c r" style="left:862px;width:88px">3 457,67</div>
<div class="c r" style="left:951px;width:121px">20 746,00</div>
<div class="c" style="left:1073px;width:99px">&lt;произволь...</div>
<div class="c r" style="left:1173px;width:113px">20 746,00</div>
<div class="c r" style="left:1287px;width:135px">3 457,67</div>
<div class="c r" style="left:1423px;width:121px">20 746,00</div>
<div class="c" style="left:1545px;width:109px"></div>
</div>
<div class="row" style="top:439px">
<div class="c r" style="left:0px;width:46px">14</div>
<div class="c" style="left:47px;width:36px"></div>
<div class="c" style="left:84px;width:182px">Теория для практиков</div>
<div class="c g" style="left:267px;width:82px">&lt;серия ...</div>
<div class="c g" style="left:350px;width:82px">&lt;характ...</div>
<div class="c" style="left:433px;width:24px">ц</div>
<div class="c r" style="left:458px;width:96px">1,000</div>
<div class="c" style="left:555px;width:87px">&lt;произво...</div>
<div class="c r" style="left:643px;width:111px">9 653,00</div>
<div class="c" style="left:755px;width:106px">20%</div>
<div class="c r" style="left:862px;width:88px">1 608,83</div>
<div class="c r" style="left:951px;width:121px">9 653,00</div>
<div class="c" style="left:1073px;width:99px">&lt;произволь...</div>
<div class="c r" style="left:1173px;width:113px">9 653,00</div>
<div class="c r" style="left:1287px;width:135px">1 608,83</div>
<div class="c r" style="left:1423px;width:121px">9 653,00</div>
<div class="c" style="left:1545px;width:109px"></div>
</div>
<div class="row" style="top:468px">
<div class="c r" style="left:0px;width:46px">15</div>
<div class="c" style="left:47px;width:36px"></div>
<div class="c" style="left:84px;width:182px">Теория для практиков</div>
<div class="c g" style="left:267px;width:82px">&lt;серия ...</div>
<div class="c g" style="left:350px;width:82px">&lt;характ...</div>
<div class="c" style="left:433px;width:24px">ц</div>
<div class="c r" style="left:458px;width:96px">1,000</div>
<div class="c" style="left:555px;width:87px">&lt;произво...</div>
<div class="c r" style="left:643px;width:111px">9 576,00</div>
<div class="c" style="left:755px;width:106px">20%</div>
<div class="c r" style="left:862px;width:88px">1 596,00</div>
<div class="c r" style="left:951px;width:121px">9 576,00</div>
<div class="c" style="left:1073px;width:99px">&lt;произволь...</div>
<div class="c r" style="left:1173px;width:113px">9 576,00</div>
<div class="c r" style="left:1287px;width:135px">1 596,00</div>
<div class="c r" style="left:1423px;width:121px">9 576,00</div>
<div class="c" style="left:1545px;width:109px"></div>
</div>
<div class="row" style="top:497px">
<div class="c r" style="left:0px;width:46px">16</div>
<div class="c" style="left:47px;width:36px"></div>
<div class="c" style="left:84px;width:182px">Теория для практиков</div>
<div class="c g" style="left:267px;width:82px">&lt;серия ...</div>
<div class="c g" style="left:350px;width:82px">&lt;характ...</div>
<div class="c" style="left:433px;width:24px">ц</div>
<div class="c r" style="left:458px;width:96px">1,000</div>
<div class="c" style="left:555px;width:87px">&lt;произво...</div>
<div class="c r" style="left:643px;width:111px">9 703,00</div>
<div class="c" style="left:755px;width:106px">20%</div>
<div class="c r" style="left:862px;width:88px">1 617,17</div>
<div class="c r" style="left:951px;width:121px">9 703,00</div>
<div class="c" style="left:1073px;width:99px">&lt;произволь...</div>
<div class="c r" style="left:1173px;width:113px">9 703,00</div>
<div class="c r" style="left:1287px;width:135px">1 617,17</div>
<div class="c r" style="left:1423px;width:121px">9 703,00</div>
<div class="c" style="left:1545px;width:109px"></div>
</div>
<div class="row" style="top:526px">
<div class="c r" style="left:0px;width:46px">17</div>
<div class="c" style="left:47px;width:36px"></div>
<div class="c" style="left:84px;width:182px">Теория для практиков</div>
<div class="c g" style="left:267px;width:82px">&lt;серия ...</div>
<div class="c g" style="left:350px;width:82px">&lt;характ...</div>
<div class="c" style="left:433px;width:24px">ц</div>
<div class="c r" style="left:458px;width:96px">1,000</div>
<div class="c" style="left:555px;width:87px">&lt;произво...</div>
<div class="c r" style="left:643px;width:111px">1 300,00</div>
<div class="c" style="left:755px;width:106px">20%</div>
<div class="c r" style="left:862px;width:88px">216,67</div>
<div class="c r" style="left:951px;width:121px">1 300,00</div>
<div class="c" style="left:1073px;width:99px">&lt;произволь...</div>
<div class="c r" style="left:1173px;width:113px">1 300,00</div>
<div class="c r" style="left:1287px;width:135px">216,67</div>
<div class="c r" style="left:1423px;width:121px">1 300,00</div>
<div class="c" style="left:1545px;width:109px"></div>
</div>
<div class="row" style="top:555px">
<div class="c r" style="left:0px;width:46px">18</div>
<div class="c" style="left:47px;width:36px"></div>
<div class="c" style="left:84px;width:182px">Теория для практиков</div>
<div class="c g" style="left:267px;width:82px">&lt;серия ...</div>
<div class="c g" style="left:350px;width:82px">&lt;характ...</div>
<div class="c" style="left:433px;width:24px">ц</div>
<div class="c r" style="left:458px;width:96px">1,000</div>
<div class="c" style="left:555px;width:87px">&lt;произво...</div>
<div class="c r" style="left:643px;width:111px">9 218,00</div>
<div class="c" style="left:755px;width:106px">20%</div>
<div class="c r" style="left:862px;width:88px">1 536,33</div>
<div class="c r" style="left:951px;width:121px">9 218,00</div>
<div class="c" style="left:1073px;width:99px">&lt;произволь...</div>
<div class="c r" style="left:1173px;width:113px">9 218,00</div>
<div class="c r" style="left:1287px;width:135px">1 536,33</div>
<div class="c r" style="left:1423px;width:121px">9 218,00</div>
<div class="c" style="left:1545px;width:109px"></div>
</div>
<div class="row" style="top:584px">
<div class="c r" style="left:0px;width:46px">19</div>
<div class="c" style="left:47px;width:36px"></div>
<div class="c" style="left:84px;width:182px">Теория для практиков</div>
<div class="c g" style="left:267px;width:82px">&lt;серия ...</div>
<div class="c g" style="left:350px;width:82px">&lt;характ...</div>
<div class="c" style="left:433px;width:24px">ц</div>
<div class="c r" style="left:458px;width:96px">1,000</div>
<div class="c" style="left:555px;width:87px">&lt;произво...</div>
<div class="c r" style="left:643px;width:111px">9 721,00</div>
<div class="c" style="left:755px;width:106px">20%</div>
<div class="c r" style="left:862px;width:88px">1 620,17</div>
<div class="c r" style="left:951px;width:121px">9 721,00</div>
<div class="c" style="left:1073px;width:99px">&lt;произволь...</div>
<div class="c r" style="left:1173px;width:113px">9 721,00</div>
<div class="c r" style="left:1287px;width:135px">1 620,17</div>
<div class="c r" style="left:1423px;width:121px">9 721,00</div>
<div class="c" style="left:1545px;width:109px"></div>
</div>
<div class="row" style="top:613px">
<div class="c r" style="left:0px;width:46px">20</div>
<div class="c" style="left:47px;width:36px"></div>
<div class="c" style="left:84px;width:182px">Теория для практиков</div>
<div class="c g" style="left:267px;width:82px">&lt;серия ...</div>
<div class="c g" style="left:350px;width:82px">&lt;характ...</div>
<div class="c" style="left:433px;width:24px">ц</div>
<div class="c r" style="left:458px;width:96px">1,000</div>
<div class="c" style="left:555px;width:87px">&lt;произво...</div>
<div class="c r" style="left:643px;width:111px">9 575,00</div>
<div class="c" style="left:755px;width:106px">20%</div>
<div class="c r" style="left:862px;width:88px">1 595,83</div>
<div class="c r" style="left:951px;width:121px">9 575,00</div>
<div class="c" style="left:1073px;width:99px">&lt;произволь...</div>
<div class="c r" style="left:1173px;width:113px">9 575,00</div>
<div class="c r" style="left:1287px;width:135px">1 595,83</div>
<div class="c r" style="left:1423px;width:121px">9 575,00</div>
<div class="c" style="left:1545px;width:109px"></div>
</div>
<!-- scrollbar -->
<div class="a" style="left:0;top:642px;width:1654px;height:16px;background:#fff"></div>
<div class="a" style="left:0;top:641px;width:1654px;height:1px;background:#E6E6E6"></div>
<div class="a" style="left:24px;top:647px;width:1607px;height:8px;border-radius:4px;background:#D4D4D4"></div>
<div class="a" style="left:24px;top:647px;width:1262px;height:8px;border-radius:4px;background:#9C9C9C"></div>
<div class="a" style="left:10px;top:648px;width:0;height:0;border-top:3px solid transparent;border-bottom:3px solid transparent;border-right:4px solid #C8C8C8"></div>
<div class="a" style="left:1641px;top:648px;width:0;height:0;border-top:3px solid transparent;border-bottom:3px solid transparent;border-left:4px solid #333"></div>
</div>

<!-- ============ FOOTER ============ -->
<div class="t lnk" style="left:219px;top:944px;text-decoration:underline">Пригласить Ozon к обмену электронными документами в 1С-ЭДО</div>
<div class="t lnk" style="left:221px;top:987px">Д</div><div class="t lnk" style="left:259px;top:987px">ф</div><div class="t lnk" style="left:467px;top:987px">(0)</div>
<div class="a" style="left:1482px;top:942px;width:414px;height:35px;background:#EFEFEF"></div>
<div class="t" style="left:1487px;top:952px">НДС:</div>
<div class="a" style="left:1523px;top:947px;width:111px;height:25px;border:1px solid #C9C9C9;border-radius:3px;background:#EFEFEF"></div>
<div class="t" style="left:1523px;top:952px;width:108px;text-align:right">40 097,32</div>
<div class="t" style="left:1644px;top:952px">Всего с НДС:</div>
<div class="a" style="left:1730px;top:947px;width:111px;height:25px;border:1px solid #C9C9C9;border-radius:3px;background:#EFEFEF"></div>
<div class="t" style="left:1730px;top:952px;width:108px;text-align:right">240 584,00</div>
<div class="t" style="left:1851px;top:952px">RUB</div>

</body></html>
